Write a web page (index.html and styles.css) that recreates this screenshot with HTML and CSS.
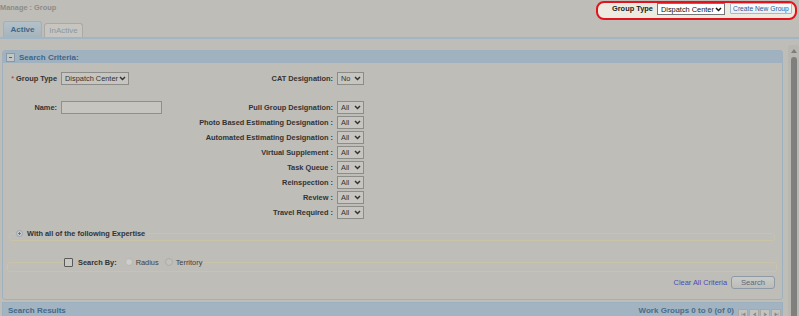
FILE: index.html
```html
<!DOCTYPE html>
<html>
<head>
<meta charset="utf-8">
<title>Manage : Group</title>
<link rel="stylesheet" href="styles.css">
</head>
<body>
<div class="topbar">
  <span class="crumb">Manage : Group</span>
  <div class="spot">
    <span class="spot-label">Group Type</span>
    <span class="sel sel-spot"><span>Dispatch Center</span><svg class="chev" viewBox="0 0 7 5"><path d="M1 1l2.5 2.5L6 1"/></svg></span>
    <span class="btn-create">Create New Group</span>
  </div>
</div>
<div class="tabs">
  <span class="tab tab-active">Active</span>
  <span class="tab tab-inactive">InActive</span>
</div>
<div class="main">
  <div class="content">
    <div class="panel">
      <div class="panel-head">
        <span class="toggle"><span class="dash"></span></span>
        <span class="panel-title">Search Criteria:</span>
      </div>
      <div class="panel-body">
        <div class="form-grid">
          <span class="lbl c1"><span class="req">*</span> Group Type</span>
          <span class="sel sel-wide c2"><span>Dispatch Center</span><svg class="chev" viewBox="0 0 7 5"><path d="M1 1l2.5 2.5L6 1"/></svg></span>
          <span class="lbl c3">CAT Designation:</span>
          <span class="sel c4"><span>No</span><svg class="chev" viewBox="0 0 7 5"><path d="M1 1l2.5 2.5L6 1"/></svg></span>

          <span class="spacer"></span>

          <span class="lbl c1">Name:</span>
          <span class="input c2"></span>
          <span class="lbl c3">Pull Group Designation:</span>
          <span class="sel c4"><span>All</span><svg class="chev" viewBox="0 0 7 5"><path d="M1 1l2.5 2.5L6 1"/></svg></span>

          <span class="lbl c3">Photo Based Estimating Designation :</span>
          <span class="sel c4"><span>All</span><svg class="chev" viewBox="0 0 7 5"><path d="M1 1l2.5 2.5L6 1"/></svg></span>

          <span class="lbl c3">Automated Estimating Designation :</span>
          <span class="sel c4"><span>All</span><svg class="chev" viewBox="0 0 7 5"><path d="M1 1l2.5 2.5L6 1"/></svg></span>

          <span class="lbl c3">Virtual Supplement :</span>
          <span class="sel c4"><span>All</span><svg class="chev" viewBox="0 0 7 5"><path d="M1 1l2.5 2.5L6 1"/></svg></span>

          <span class="lbl c3">Task Queue :</span>
          <span class="sel c4"><span>All</span><svg class="chev" viewBox="0 0 7 5"><path d="M1 1l2.5 2.5L6 1"/></svg></span>

          <span class="lbl c3">Reinspection :</span>
          <span class="sel c4"><span>All</span><svg class="chev" viewBox="0 0 7 5"><path d="M1 1l2.5 2.5L6 1"/></svg></span>

          <span class="lbl c3">Review :</span>
          <span class="sel c4"><span>All</span><svg class="chev" viewBox="0 0 7 5"><path d="M1 1l2.5 2.5L6 1"/></svg></span>

          <span class="lbl c3">Travel Required :</span>
          <span class="sel c4"><span>All</span><svg class="chev" viewBox="0 0 7 5"><path d="M1 1l2.5 2.5L6 1"/></svg></span>
        </div>

        <fieldset class="fs fs-exp">
          <legend class="lg lg-exp">
            <span class="lg-inner">
              <svg class="plus-ico" viewBox="0 0 7 7"><circle cx="3.5" cy="3.5" r="3"/><path d="M2 3.5h3M3.5 2v3"/></svg>
              <span class="lg-text">With all of the following Expertise</span>
            </span>
          </legend>
        </fieldset>

        <fieldset class="fs fs-search">
          <legend class="lg lg-search">
            <span class="lg-inner">
              <span class="chk"></span>
              <span class="lg-text sb">Search By:</span>
              <span class="radio radio-on"></span>
              <span class="opt">Radius</span>
              <span class="radio radio-off"></span>
              <span class="opt">Territory</span>
            </span>
          </legend>
        </fieldset>

        <div class="actions">
          <span class="link">Clear All Criteria</span>
          <span class="btn-search">Search</span>
        </div>
      </div>
    </div>

    <div class="results">
      <span class="results-title">Search Results</span>
      <span class="count">Work Groups 0 to 0 (of 0)</span>
      <span class="pager">
        <span class="pg"><svg viewBox="0 0 8 6"><path d="M2 1v4M6 1L3 3l3 2z"/></svg></span>
        <span class="pg"><svg viewBox="0 0 8 6"><path d="M5.5 1L2.5 3l3 2z"/></svg></span>
        <span class="pg"><svg viewBox="0 0 8 6"><path d="M2.5 1l3 2-3 2z"/></svg></span>
        <span class="pg"><svg viewBox="0 0 8 6"><path d="M6 1v4M2 1l3 2-3 2z"/></svg></span>
      </span>
    </div>
  </div>
  <div class="vscroll">
    <svg class="up" viewBox="0 0 6 4"><path d="M0 4L3 0l3 4z"/></svg>
    <span class="thumb"></span>
  </div>
</div>
</body>
</html>
```

FILE: styles.css
```css
* { box-sizing: border-box; }

html, body {
  margin: 0;
  padding: 0;
  overflow: hidden;
}

body {
  width: 799px;
  height: 316px;
  background: #bebdb8;
  font-family: "Liberation Sans", Arial, sans-serif;
  font-size: 7.4px;
  color: #333;
}

/* ---------- top bar ---------- */
.topbar {
  display: flex;
  height: 21px;
}

.crumb {
  font-weight: bold;
  color: #8d8c87;
  padding-top: 3px;
  line-height: 9px;
  white-space: nowrap;
}

.spot {
  margin: 1px 2px 0 auto;
  width: 201px;
  height: 19px;
  border: 2px solid #e3121c;
  border-radius: 8px;
  background: #edebdf;
  display: flex;
  align-items: flex-start;
  padding: 0 2px 0 14px;
  white-space: nowrap;
}

.spot > * { flex-shrink: 0; }

.spot-label {
  font-weight: bold;
  color: #222;
  line-height: 11px;
  margin-right: 4px;
}

.sel {
  display: inline-flex;
  align-items: center;
  justify-content: space-between;
  height: 13px;
  border: 1px solid #8c8c88;
  background: #c6c5bf;
  padding: 0 2px 0 3px;
  color: #333;
  white-space: nowrap;
}

.chev {
  width: 7px;
  height: 5px;
  fill: none;
  stroke: #333;
  stroke-width: 1.5;
}

.sel-spot {
  width: 68px;
  height: 12px;
  background: #fff;
  border-color: #767676;
  color: #111;
  margin-right: 5px;
}

.sel-spot .chev { stroke: #111; }

.btn-create {
  width: 62px;
  height: 11px;
  border: 1px solid #a6b9cb;
  background: linear-gradient(#fcfdfe, #e7edf4);
  color: #2d5d96;
  font-size: 6.7px;
  display: flex;
  align-items: center;
  justify-content: center;
  border-radius: 1px;
}

/* ---------- tabs ---------- */
.tabs {
  display: flex;
  align-items: flex-end;
  gap: 2px;
  height: 18px;
  padding-left: 3px;
  border-bottom: 2px solid #a0b6c6;
}

.tab {
  width: 39px;
  display: flex;
  align-items: center;
  justify-content: center;
  font-size: 8px;
  border: 1px solid;
  border-bottom: none;
  border-radius: 3px 3px 0 0;
}

.tab-active {
  height: 16px;
  background: linear-gradient(#b4c1c9, #a6b4bd);
  border-color: #9fb1be;
  color: #3d6789;
  font-weight: bold;
}

.tab-inactive {
  height: 14px;
  background: #c6c5c0;
  border-color: #a9a9a5;
  color: #8b98a3;
}

/* ---------- main ---------- */
.main {
  display: flex;
  height: 277px;
}

.content {
  width: 785px;
  padding: 11px 2px 0;
  overflow: hidden;
}

.vscroll {
  width: 11px;
  margin: 6px 0 0 3px;
  background: #b8b7b2;
  border-radius: 3px 3px 0 0;
  display: flex;
  flex-direction: column;
  align-items: center;
  padding-top: 4px;
}

.up {
  width: 6px;
  height: 4px;
  fill: #7d7d7b;
}

.thumb {
  width: 6px;
  flex: 1;
  margin-top: 4px;
  background: #7f7f7d;
  border-radius: 3px 3px 0 0;
}

/* ---------- panel ---------- */
.panel {
  border: 1px solid #9fb1bf;
  border-radius: 3px;
}

.panel-head {
  height: 12px;
  background: #a0b2c0;
  display: flex;
  align-items: center;
  padding-left: 3px;
}

.toggle {
  width: 9px;
  height: 9px;
  border: 1px solid #8a98a3;
  background: #c3c6c7;
  display: flex;
  align-items: center;
  justify-content: center;
  margin-right: 4px;
}

.dash {
  width: 3px;
  height: 1px;
  background: #4f5f6c;
}

.panel-title {
  font-size: 8px;
  font-weight: bold;
  color: #3e6687;
}

.panel-body {
  padding: 8px 0 10px;
}

.form-grid {
  display: grid;
  grid-template-columns: 54px 101px 167px 27px;
  grid-template-rows: 15px 13px 16px repeat(7, 15px);
  column-gap: 4px;
  align-items: center;
}

.c1 { grid-column: 1; }
.c2 { grid-column: 2; justify-self: start; }
.c3 { grid-column: 3; }
.c4 { grid-column: 4; }

.spacer { grid-column: 1 / -1; }

.lbl {
  text-align: right;
  font-weight: bold;
  white-space: nowrap;
  color: #333;
}

.req {
  color: #c0262b;
  font-weight: normal;
}

.sel-wide { width: 68px; }

.input {
  width: 101px;
  height: 13px;
  border: 1px solid #8f8f8b;
  background: #c6c5c0;
}

/* ---------- fieldsets ---------- */
.fs {
  border: 1px solid #c9c3a8;
  border-radius: 3px;
  padding: 0 0 2px;
  min-width: 0;
}

.fs-exp { margin: 8px 7px 0 6px; }

.fs-search {
  margin: 16px 5px 0 4px;
  padding-bottom: 4px;
}

.lg {
  padding: 0 1px;
  height: 10px;
}

.lg-exp { margin-left: 5px; }
.lg-search { margin-left: 55px; }

.lg-inner {
  display: flex;
  align-items: center;
  height: 10px;
  white-space: nowrap;
}

.plus-ico {
  width: 7px;
  height: 7px;
  fill: #c8cacb;
  stroke: #8fa0ad;
  stroke-width: 0.8;
  margin-right: 4px;
}

.plus-ico path { stroke: #4d6b85; }

.lg-text {
  font-weight: bold;
  color: #333;
}

.chk {
  width: 9px;
  height: 9px;
  border: 1px solid #5a5a5a;
  background: #c9c8c3;
  border-radius: 1px;
  margin-right: 5px;
}

.sb { margin-right: 8px; }

.radio {
  width: 8px;
  height: 8px;
  border-radius: 50%;
  margin-right: 3px;
}

.radio-on {
  background: #cdcdc9;
  border: 1px solid #b6b6b2;
}

.radio-off {
  background: #c2c1bc;
  border: 1px solid #acacaa;
}

.opt {
  color: #3f3f3f;
  margin-right: 6px;
}

.opt:last-child { margin-right: 0; }

/* ---------- actions ---------- */
.actions {
  display: flex;
  justify-content: flex-end;
  align-items: center;
  gap: 4px;
  height: 14px;
  margin-top: 3px;
  padding-right: 7px;
}

.link {
  color: #4b4bb8;
}

.btn-search {
  width: 44px;
  height: 13px;
  border: 1px solid #8d9aa6;
  border-radius: 3px;
  background: linear-gradient(#cacac6, #bcbcb8);
  color: #596a7a;
  font-size: 7.6px;
  display: flex;
  align-items: center;
  justify-content: center;
}

/* ---------- results ---------- */
.results {
  margin-top: 2px;
  height: 20px;
  border: 1px solid #9cb0bf;
  background: #a2b4c2;
  display: flex;
  align-items: flex-start;
  padding: 3px 1px 0 5px;
  font-weight: bold;
  font-size: 8px;
  color: #44698a;
}

.results-title { line-height: 10px; }

.count {
  margin-left: auto;
  line-height: 10px;
  color: #4a6d8b;
}

.pager {
  display: flex;
  gap: 1px;
  margin: 3px 0 0 4px;
}

.pg {
  width: 10px;
  height: 10px;
  border: 1px solid #a8a8a5;
  background: #c3c3bf;
  display: flex;
  align-items: center;
  justify-content: center;
}

.pg svg {
  width: 7px;
  height: 5px;
  fill: #8a8a88;
  stroke: #8a8a88;
  stroke-width: 0.6;
}
```
